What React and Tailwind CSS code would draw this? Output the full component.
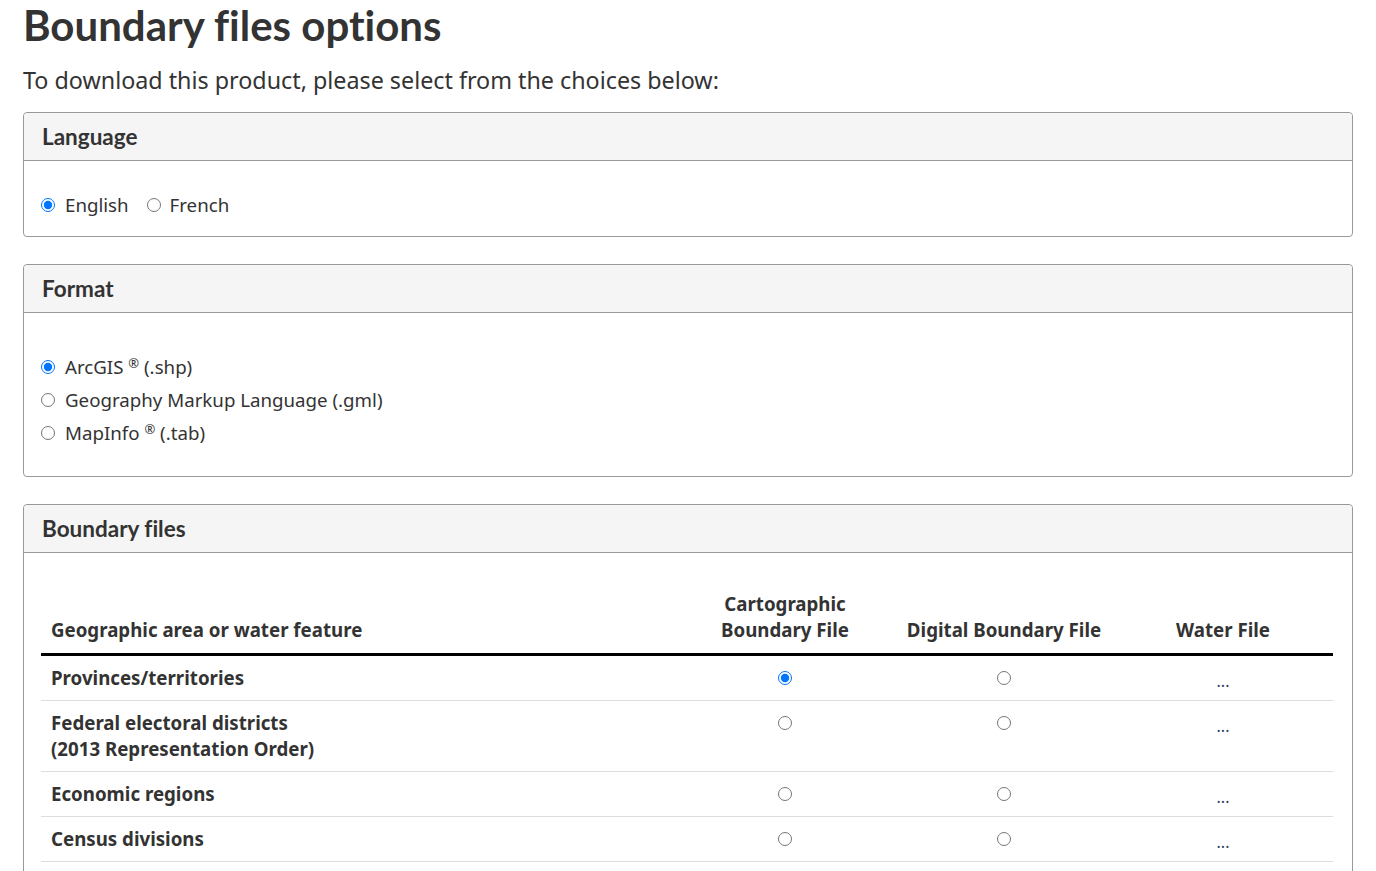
import React from "react";

const rows = [
  { name: ["Provinces/territories"], carto: true },
  { name: ["Federal electoral districts", "(2013 Representation Order)"] },
  { name: ["Economic regions"] },
  { name: ["Census divisions"] },
];

const Panel = ({ title, children, bodyClass }) => (
  <section className="border border-[#999] rounded-[4px] mb-[27px]">
    <div className="bg-[#f5f5f5] border-b border-[#999] h-[48px] px-[18px] pt-[2px] flex items-center rounded-t-[4px]">
      <h2 className="text-[22.5px] font-bold text-[#333] font-['Lato',sans-serif] leading-none">{title}</h2>
    </div>
    <div className={bodyClass}>{children}</div>
  </section>
);

const Radio = ({ checked, name }) => (
  <input type="radio" name={name} defaultChecked={checked} className="m-0 w-[14px] h-[14px] accent-[#0075ff]" />
);

const App = () => {
  return (
    <div className="px-[23px] text-[#333] font-['Noto_Sans',sans-serif] bg-white min-h-[871px] [font-variant-ligatures:none]">
      <h1 className="font-['Lato',sans-serif] font-bold text-[42px] leading-[50px] text-[#333]">Boundary files options</h1>
      <p className="text-[23.3px] leading-[30px] mt-[15px] mb-[17px]">To download this product, please select from the choices below:</p>

      <Panel title="Language" bodyClass="pl-[17px] pt-[30px] pb-[17px]">
        <div className="flex items-center text-[18.7px] leading-[28px]">
          <label className="flex items-center gap-[10px] mr-[18px]">
            <Radio name="lang" checked />
            <span>English</span>
          </label>
          <label className="flex items-center gap-[9px]">
            <Radio name="lang" />
            <span>French</span>
          </label>
        </div>
      </Panel>

      <Panel title="Format" bodyClass="pl-[17px] pt-[37px] pb-[27px]">
        <div className="flex flex-col text-[18.7px] leading-[33px]">
          <label className="flex items-center gap-[10px]">
            <Radio name="fmt" checked />
            <span>ArcGIS <sup className="text-[13px]">®</sup> (.shp)</span>
          </label>
          <label className="flex items-center gap-[10px]">
            <Radio name="fmt" />
            <span>Geography Markup Language (.gml)</span>
          </label>
          <label className="flex items-center gap-[10px]">
            <Radio name="fmt" />
            <span>MapInfo <sup className="text-[13px]">®</sup> (.tab)</span>
          </label>
        </div>
      </Panel>

      <Panel title="Boundary files" bodyClass="pl-[17px] pr-[19px] pt-[38px] pb-[20px]">
        <table className="w-full border-collapse text-[18.7px] leading-[26px]">
          <thead>
            <tr className="border-b-[3px] border-black">
              <th className="text-left align-bottom px-[10px] pb-[10px] font-bold">Geographic area or water feature</th>
              <th className="w-[220px] align-bottom px-[10px] pb-[10px] font-bold">Cartographic Boundary File</th>
              <th className="w-[218px] align-bottom px-[8px] pb-[10px] font-bold">Digital Boundary File</th>
              <th className="w-[220px] align-bottom px-[10px] pb-[10px] font-bold">Water File</th>
            </tr>
          </thead>
          <tbody>
            {rows.map((r, i) => (
              <tr key={i} className="border-b border-[#ddd]">
                <td className="px-[10px] py-[9px] font-bold align-top">
                  {r.name.map((n) => (
                    <div key={n}>{n}</div>
                  ))}
                </td>
                <td className="text-center align-top py-[9px]">
                  <div className="h-[26px] flex items-center justify-center">
                    <Radio name="bf" checked={r.carto} />
                  </div>
                </td>
                <td className="text-center align-top py-[9px]">
                  <div className="h-[26px] flex items-center justify-center">
                    <Radio name="bf" />
                  </div>
                </td>
                <td className="text-center align-top py-[9px] text-[#284162] text-[16px]">
                  <div className="h-[26px] flex items-end justify-center leading-[20px]">...</div>
                </td>
              </tr>
            ))}
          </tbody>
        </table>
      </Panel>
    </div>
  );
};

export default App;
